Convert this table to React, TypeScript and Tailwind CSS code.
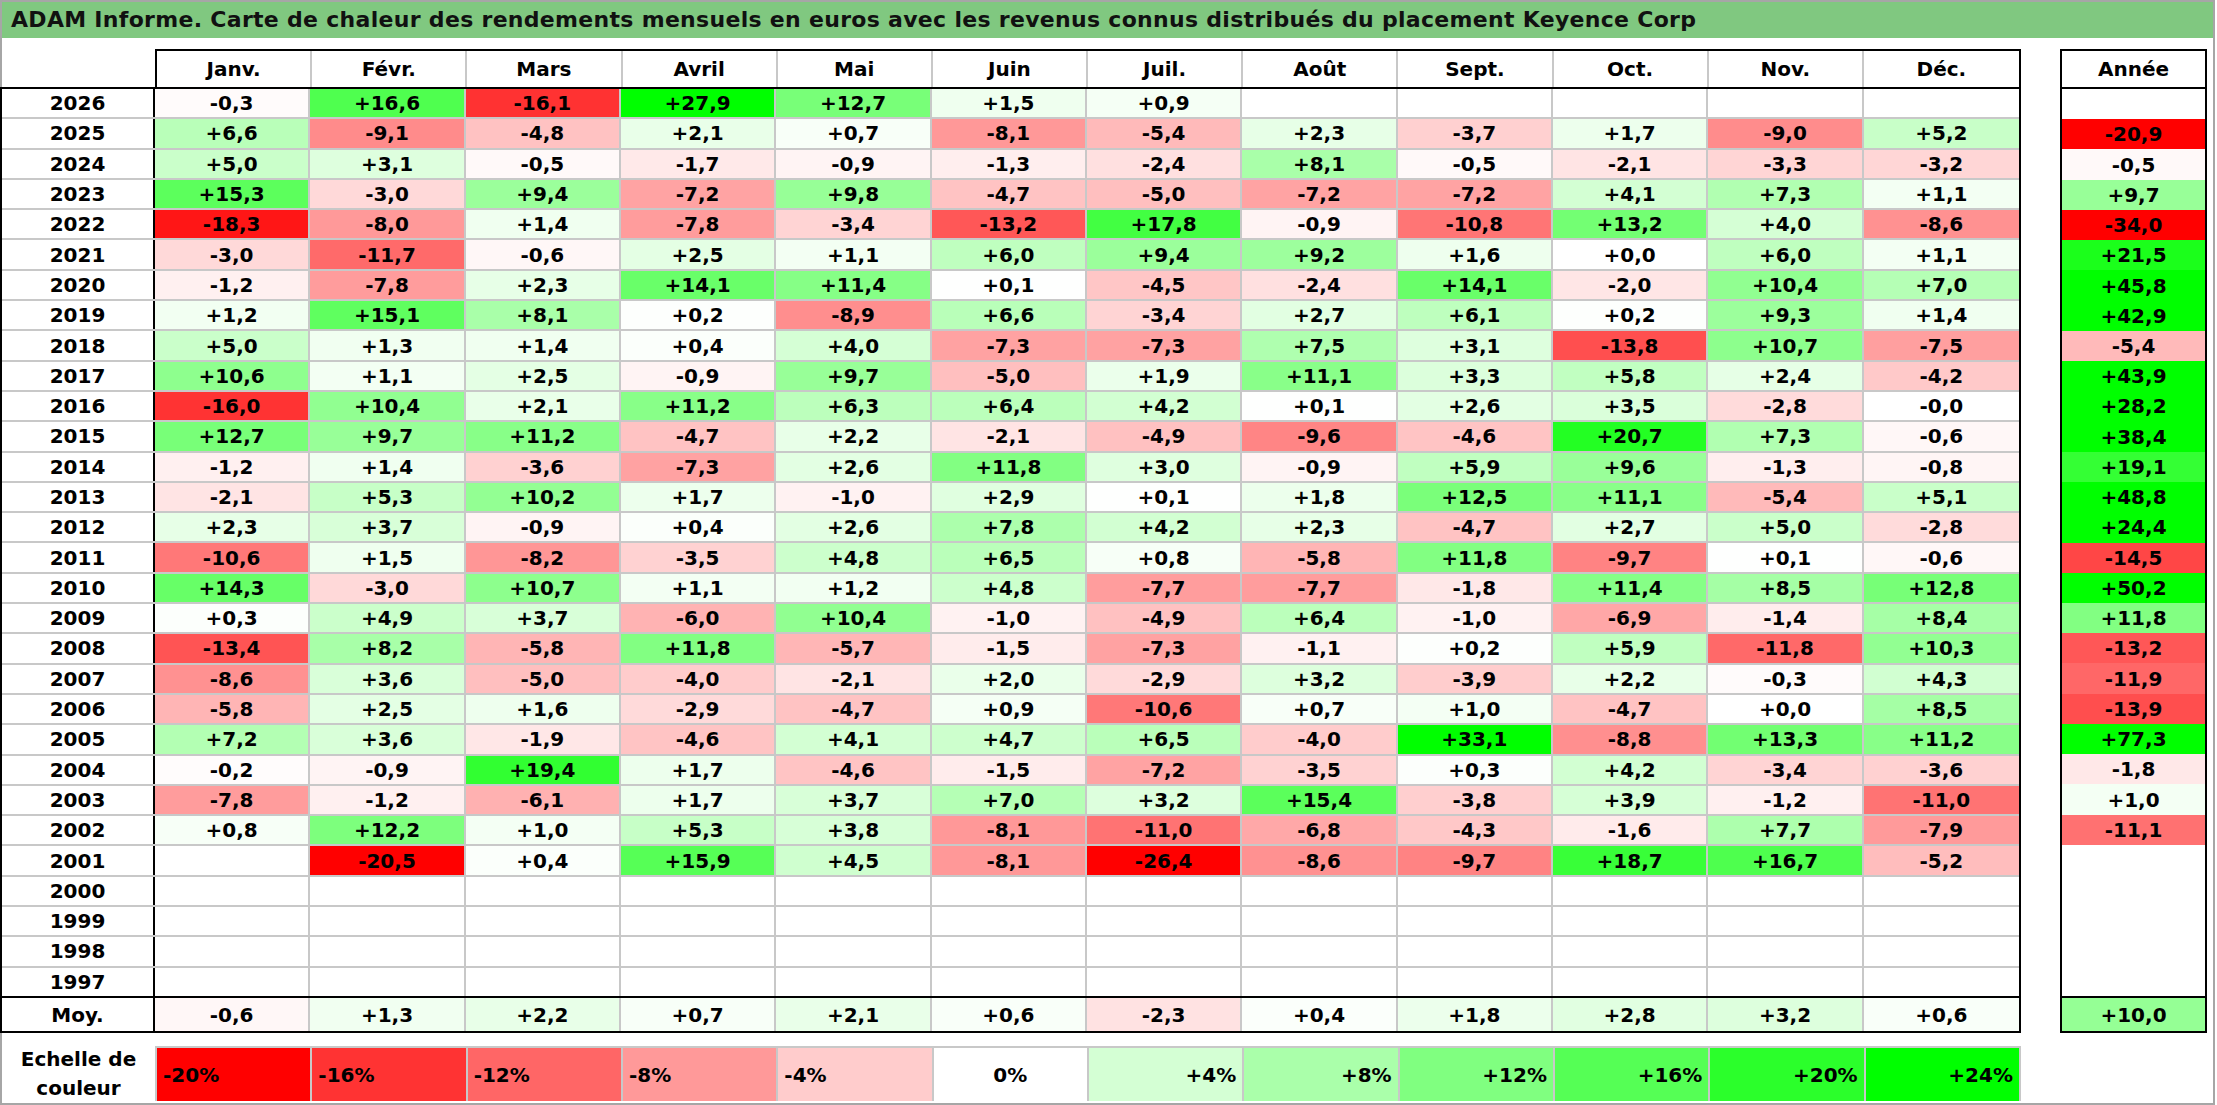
import React from 'react';

const MONTHS = ['Janv.', 'Févr.', 'Mars', 'Avril', 'Mai', 'Juin', 'Juil.', 'Août', 'Sept.', 'Oct.', 'Nov.', 'Déc.'];

// '.' = empty cell
const ROWS: { year: string; m: string; y: string }[] = [
  { year: '2026', m: '-0,3 +16,6 -16,1 +27,9 +12,7 +1,5 +0,9 . . . . .', y: '' },
  { year: '2025', m: '+6,6 -9,1 -4,8 +2,1 +0,7 -8,1 -5,4 +2,3 -3,7 +1,7 -9,0 +5,2', y: '-20,9' },
  { year: '2024', m: '+5,0 +3,1 -0,5 -1,7 -0,9 -1,3 -2,4 +8,1 -0,5 -2,1 -3,3 -3,2', y: '-0,5' },
  { year: '2023', m: '+15,3 -3,0 +9,4 -7,2 +9,8 -4,7 -5,0 -7,2 -7,2 +4,1 +7,3 +1,1', y: '+9,7' },
  { year: '2022', m: '-18,3 -8,0 +1,4 -7,8 -3,4 -13,2 +17,8 -0,9 -10,8 +13,2 +4,0 -8,6', y: '-34,0' },
  { year: '2021', m: '-3,0 -11,7 -0,6 +2,5 +1,1 +6,0 +9,4 +9,2 +1,6 +0,0 +6,0 +1,1', y: '+21,5' },
  { year: '2020', m: '-1,2 -7,8 +2,3 +14,1 +11,4 +0,1 -4,5 -2,4 +14,1 -2,0 +10,4 +7,0', y: '+45,8' },
  { year: '2019', m: '+1,2 +15,1 +8,1 +0,2 -8,9 +6,6 -3,4 +2,7 +6,1 +0,2 +9,3 +1,4', y: '+42,9' },
  { year: '2018', m: '+5,0 +1,3 +1,4 +0,4 +4,0 -7,3 -7,3 +7,5 +3,1 -13,8 +10,7 -7,5', y: '-5,4' },
  { year: '2017', m: '+10,6 +1,1 +2,5 -0,9 +9,7 -5,0 +1,9 +11,1 +3,3 +5,8 +2,4 -4,2', y: '+43,9' },
  { year: '2016', m: '-16,0 +10,4 +2,1 +11,2 +6,3 +6,4 +4,2 +0,1 +2,6 +3,5 -2,8 -0,0', y: '+28,2' },
  { year: '2015', m: '+12,7 +9,7 +11,2 -4,7 +2,2 -2,1 -4,9 -9,6 -4,6 +20,7 +7,3 -0,6', y: '+38,4' },
  { year: '2014', m: '-1,2 +1,4 -3,6 -7,3 +2,6 +11,8 +3,0 -0,9 +5,9 +9,6 -1,3 -0,8', y: '+19,1' },
  { year: '2013', m: '-2,1 +5,3 +10,2 +1,7 -1,0 +2,9 +0,1 +1,8 +12,5 +11,1 -5,4 +5,1', y: '+48,8' },
  { year: '2012', m: '+2,3 +3,7 -0,9 +0,4 +2,6 +7,8 +4,2 +2,3 -4,7 +2,7 +5,0 -2,8', y: '+24,4' },
  { year: '2011', m: '-10,6 +1,5 -8,2 -3,5 +4,8 +6,5 +0,8 -5,8 +11,8 -9,7 +0,1 -0,6', y: '-14,5' },
  { year: '2010', m: '+14,3 -3,0 +10,7 +1,1 +1,2 +4,8 -7,7 -7,7 -1,8 +11,4 +8,5 +12,8', y: '+50,2' },
  { year: '2009', m: '+0,3 +4,9 +3,7 -6,0 +10,4 -1,0 -4,9 +6,4 -1,0 -6,9 -1,4 +8,4', y: '+11,8' },
  { year: '2008', m: '-13,4 +8,2 -5,8 +11,8 -5,7 -1,5 -7,3 -1,1 +0,2 +5,9 -11,8 +10,3', y: '-13,2' },
  { year: '2007', m: '-8,6 +3,6 -5,0 -4,0 -2,1 +2,0 -2,9 +3,2 -3,9 +2,2 -0,3 +4,3', y: '-11,9' },
  { year: '2006', m: '-5,8 +2,5 +1,6 -2,9 -4,7 +0,9 -10,6 +0,7 +1,0 -4,7 +0,0 +8,5', y: '-13,9' },
  { year: '2005', m: '+7,2 +3,6 -1,9 -4,6 +4,1 +4,7 +6,5 -4,0 +33,1 -8,8 +13,3 +11,2', y: '+77,3' },
  { year: '2004', m: '-0,2 -0,9 +19,4 +1,7 -4,6 -1,5 -7,2 -3,5 +0,3 +4,2 -3,4 -3,6', y: '-1,8' },
  { year: '2003', m: '-7,8 -1,2 -6,1 +1,7 +3,7 +7,0 +3,2 +15,4 -3,8 +3,9 -1,2 -11,0', y: '+1,0' },
  { year: '2002', m: '+0,8 +12,2 +1,0 +5,3 +3,8 -8,1 -11,0 -6,8 -4,3 -1,6 +7,7 -7,9', y: '-11,1' },
  { year: '2001', m: '. -20,5 +0,4 +15,9 +4,5 -8,1 -26,4 -8,6 -9,7 +18,7 +16,7 -5,2', y: '' },
  { year: '2000', m: '. . . . . . . . . . . .', y: '' },
  { year: '1999', m: '. . . . . . . . . . . .', y: '' },
  { year: '1998', m: '. . . . . . . . . . . .', y: '' },
  { year: '1997', m: '. . . . . . . . . . . .', y: '' },
];

const AVG = { m: '-0,6 +1,3 +2,2 +0,7 +2,1 +0,6 -2,3 +0,4 +1,8 +2,8 +3,2 +0,6', y: '+10,0' };

const SCALE = [
  { label: '-20%', bg: 'bg-[#ff0000]', align: 'justify-start' },
  { label: '-16%', bg: 'bg-[#ff3333]', align: 'justify-start' },
  { label: '-12%', bg: 'bg-[#ff6666]', align: 'justify-start' },
  { label: '-8%', bg: 'bg-[#ff9999]', align: 'justify-start' },
  { label: '-4%', bg: 'bg-[#ffcccc]', align: 'justify-start' },
  { label: '0%', bg: 'bg-white', align: 'justify-center' },
  { label: '+4%', bg: 'bg-[#d4ffd4]', align: 'justify-end' },
  { label: '+8%', bg: 'bg-[#aaffaa]', align: 'justify-end' },
  { label: '+12%', bg: 'bg-[#80ff80]', align: 'justify-end' },
  { label: '+16%', bg: 'bg-[#55ff55]', align: 'justify-end' },
  { label: '+20%', bg: 'bg-[#2bff2b]', align: 'justify-end' },
  { label: '+24%', bg: 'bg-[#00ff00]', align: 'justify-end' },
];

function cells(s: string) {
  return s.split(' ').map((v) => (v === '.' ? '' : v));
}

// same colour scale as the legend: -20% full red, +24% full green
function heat(v: string) {
  if (!v) return '#ffffff';
  const n = parseFloat(v.replace(',', '.'));
  if (n >= 0) {
    const c = Math.round(255 * (1 - Math.min(n / 24, 1)));
    return `rgb(${c},255,${c})`;
  }
  const c = Math.round(255 * (1 - Math.min(-n / 20, 1)));
  return `rgb(255,${c},${c})`;
}

function MonthCells({ values }: { values: string[] }) {
  return (
    <div className="grid min-h-0 flex-1 grid-cols-12">
      {values.map((v, i) => (
        <div
          key={i}
          className={`flex min-h-0 items-center justify-center ${i < 11 ? 'border-r-2 border-[#c8c8c8]' : ''}`}
          style={{ backgroundColor: heat(v) }}
        >
          {v}
        </div>
      ))}
    </div>
  );
}

export default function App() {
  return (
    <div className="h-[1105px] w-[2215px] border-2 border-[#a6a6a6] bg-white font-['DejaVu_Sans',sans-serif] text-[20px] leading-[22px] font-bold text-black">
      {/* Title */}
      <div className="flex h-[36px] items-center bg-[#80c880] pl-[9px] text-[22px] tracking-[0.3px] text-[#111]">
        ADAM Informe. Carte de chaleur des rendements mensuels en euros avec les revenus connus distribués du placement Keyence Corp
      </div>

      <div className="mt-[11px] flex">
        {/* Main table */}
        <div className="-ml-[2px] w-[2021px]">
          <div className="flex h-[38px]">
            <div className="w-[155px]" />
            <div className="grid flex-1 grid-cols-12 border-x-2 border-t-2 border-black">
              {MONTHS.map((m, i) => (
                <div key={m} className={`flex items-center justify-center ${i < 11 ? 'border-r-2 border-[#c8c8c8]' : ''}`}>
                  {m}
                </div>
              ))}
            </div>
          </div>

          <div className="h-[946px] border-2 border-black">
            <div className="flex h-[907px] flex-col">
              {ROWS.map((r, i) => (
                <div key={r.year} className={`flex min-h-0 flex-1 ${i < ROWS.length - 1 ? 'border-b-2 border-[#c8c8c8]' : ''}`}>
                  <div className="flex w-[153px] items-center justify-center border-r-2 border-black">{r.year}</div>
                  <MonthCells values={cells(r.m)} />
                </div>
              ))}
            </div>
            <div className="flex h-[35px] border-t-2 border-black">
              <div className="flex w-[153px] items-center justify-center border-r-2 border-black">Moy.</div>
              <MonthCells values={cells(AVG.m)} />
            </div>
          </div>
        </div>

        <div className="w-[39px]" />

        {/* Year column */}
        <div className="w-[147px]">
          <div className="flex h-[38px] items-center justify-center border-x-2 border-t-2 border-black">Année</div>
          <div className="h-[946px] border-2 border-black">
            <div className="flex h-[907px] flex-col">
              {ROWS.map((r) => (
                <div key={r.year} className="flex min-h-0 flex-1 items-center justify-center" style={{ backgroundColor: heat(r.y) }}>
                  {r.y}
                </div>
              ))}
            </div>
            <div className="flex h-[35px] items-center justify-center border-t-2 border-black" style={{ backgroundColor: heat(AVG.y) }}>
              {AVG.y}
            </div>
          </div>
        </div>
      </div>

      {/* Colour scale */}
      <div className="mt-[13px] flex h-[55px]">
        <div className="flex w-[153px] flex-col items-center justify-center leading-[29px]">
          <span>Echelle de</span>
          <span>couleur</span>
        </div>
        <div className="grid w-[1866px] grid-cols-12 border-l-2 border-t-2 border-[#c8c8c8]">
          {SCALE.map((s) => (
            <div key={s.label} className={`flex items-center border-r-2 border-[#c8c8c8] px-[6px] ${s.bg} ${s.align}`}>
              {s.label}
            </div>
          ))}
        </div>
      </div>
    </div>
  );
}
